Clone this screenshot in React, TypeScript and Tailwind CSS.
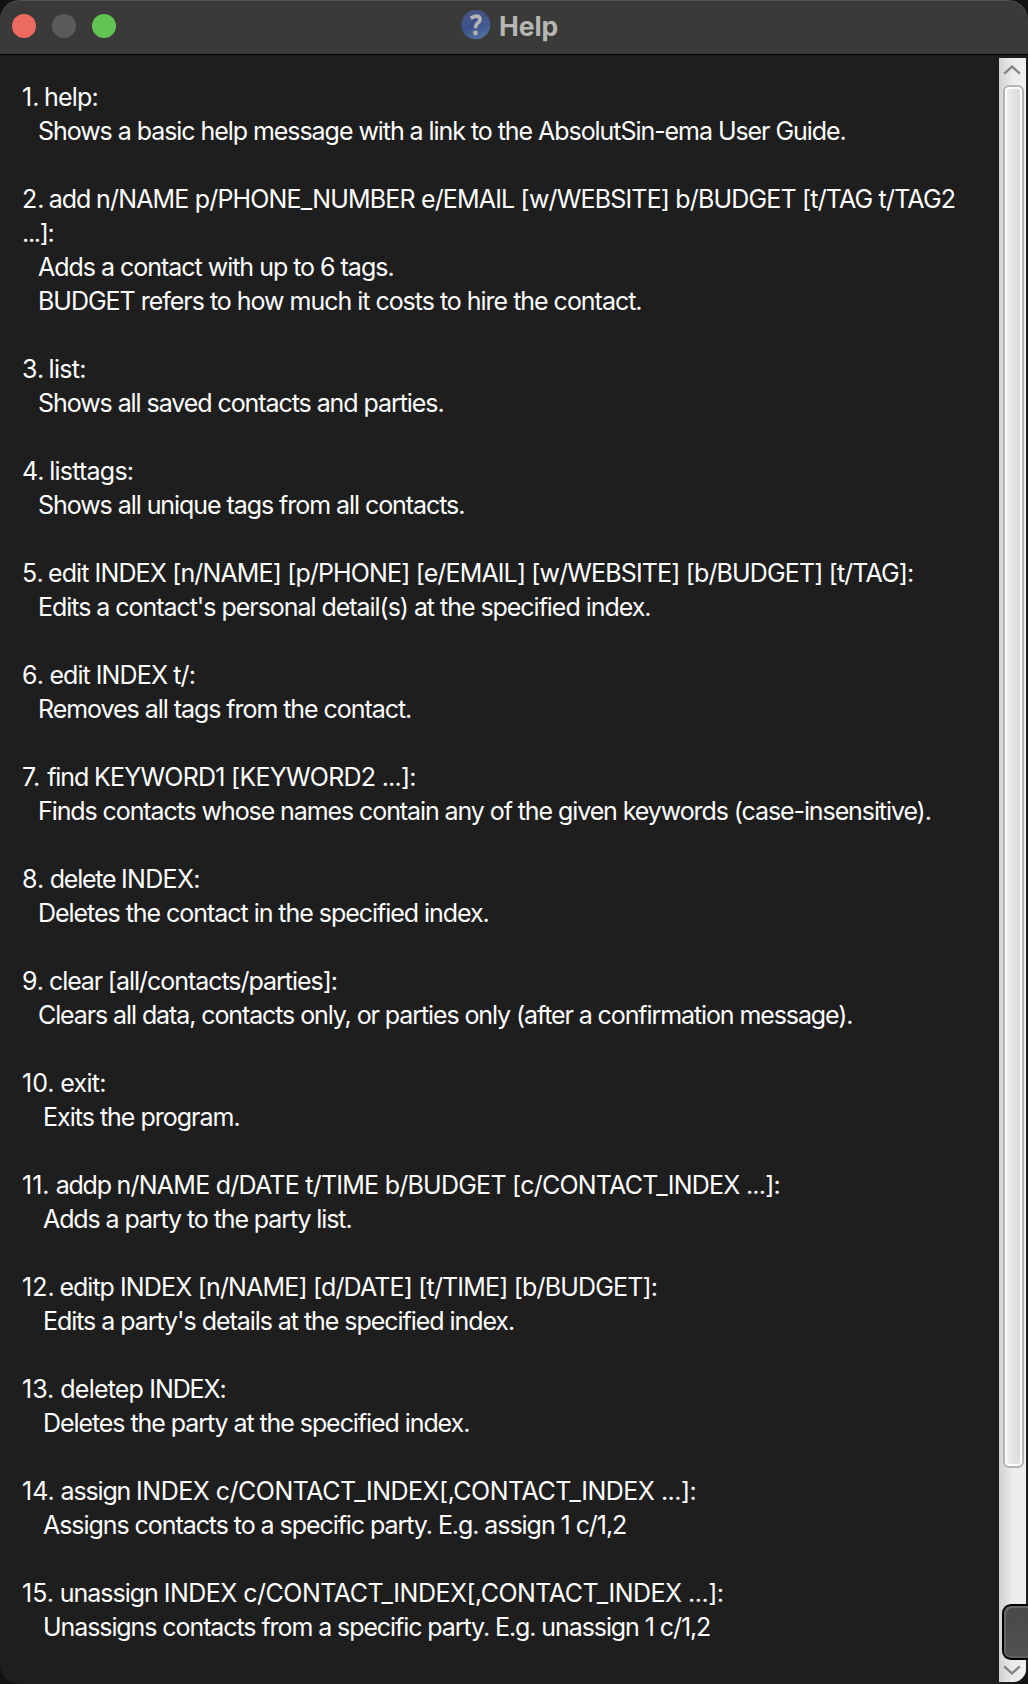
type Line = { text: string; tracking: string };
type Entry = {
  number: string;
  gap: string;
  command: Line[];
  wrapped?: Line;
  body: Line[];
  indent: string;
};

const SMALL = "pl-[16px]";
const LARGE = "pl-[21px]";

const entries: Entry[] = [
  {
    number: "1.",
    gap: "mr-[-1.6px]",
    command: [{ text: " help:", tracking: "tracking-[-0.8px]" }],
    body: [{ text: "Shows a basic help message with a link to the AbsolutSin-ema User Guide.", tracking: "tracking-[-1.055px]" }],
    indent: SMALL,
  },
  {
    number: "2.",
    gap: "mr-[-1.6px]",
    command: [
      { text: " add ", tracking: "tracking-[-1.1px]" },
      { text: "n/NAME p/PHONE_NUMBER e/EMAIL [w/WEBSITE] b/BUDGET [t/TAG t/TAG2", tracking: "tracking-[-0.83px]" },
    ],
    wrapped: { text: "...]:", tracking: "tracking-[-1.3px]" },
    body: [
      { text: "Adds a contact with up to 6 tags.", tracking: "tracking-[-1.02px]" },
      { text: "BUDGET refers to how much it costs to hire the contact.", tracking: "tracking-[-1.02px]" },
    ],
    indent: SMALL,
  },
  {
    number: "3.",
    gap: "mr-[-1.9px]",
    command: [{ text: " list:", tracking: "tracking-[-0.69px]" }],
    body: [{ text: "Shows all saved contacts and parties.", tracking: "tracking-[-1.07px]" }],
    indent: SMALL,
  },
  {
    number: "4.",
    gap: "mr-[-1.5px]",
    command: [{ text: " listtags:", tracking: "tracking-[-0.77px]" }],
    body: [{ text: "Shows all unique tags from all contacts.", tracking: "tracking-[-1.06px]" }],
    indent: SMALL,
  },
  {
    number: "5.",
    gap: "mr-[-1.85px]",
    command: [
      { text: " edit ", tracking: "tracking-[-0.915px]" },
      { text: "INDEX [n/NAME] [p/PHONE] [e/EMAIL] [w/WEBSITE] [b/BUDGET] [t/TAG]:", tracking: "tracking-[-0.86px]" },
    ],
    body: [{ text: "Edits a contact's personal detail(s) at the specified index.", tracking: "tracking-[-1.04px]" }],
    indent: SMALL,
  },
  {
    number: "6.",
    gap: "mr-[-0.4px]",
    command: [
      { text: " edit ", tracking: "tracking-[-1px]" },
      { text: "INDEX t/:", tracking: "tracking-[-0.85px]" },
    ],
    body: [{ text: "Removes all tags from the contact.", tracking: "tracking-[-1.05px]" }],
    indent: SMALL,
  },
  {
    number: "7.",
    gap: "mr-[1.15px]",
    command: [
      { text: " find ", tracking: "tracking-[-1.15px]" },
      { text: "KEYWORD1 [KEYWORD2 ...]:", tracking: "tracking-[-0.75px]" },
    ],
    body: [{ text: "Finds contacts whose names contain any of the given keywords (case-insensitive).", tracking: "tracking-[-1.09px]" }],
    indent: SMALL,
  },
  {
    number: "8.",
    gap: "mr-[-0.15px]",
    command: [
      { text: " delete ", tracking: "tracking-[-1.25px]" },
      { text: "INDEX:", tracking: "tracking-[-0.7px]" },
    ],
    body: [{ text: "Deletes the contact in the specified index.", tracking: "tracking-[-1.04px]" }],
    indent: SMALL,
  },
  {
    number: "9.",
    gap: "mr-[-0.85px]",
    command: [
      { text: " clear ", tracking: "tracking-[-1.15px]" },
      { text: "[all/contacts/parties]:", tracking: "tracking-[-1.03px]" },
    ],
    body: [{ text: "Clears all data, contacts only, or parties only (after a confirmation message).", tracking: "tracking-[-1.1px]" }],
    indent: SMALL,
  },
  {
    number: "10.",
    gap: "mr-[-0.6px]",
    command: [{ text: " exit:", tracking: "tracking-[-0.7px]" }],
    body: [{ text: "Exits the program.", tracking: "tracking-[-1px]" }],
    indent: LARGE,
  },
  {
    number: "11.",
    gap: "mr-[0.45px]",
    command: [
      { text: " addp ", tracking: "tracking-[-1.25px]" },
      { text: "n/NAME d/DATE t/TIME b/BUDGET [c/CONTACT_INDEX ...]:", tracking: "tracking-[-0.755px]" },
    ],
    body: [{ text: "Adds a party to the party list.", tracking: "tracking-[-1.1px]" }],
    indent: LARGE,
  },
  {
    number: "12.",
    gap: "mr-[-1.2px]",
    command: [
      { text: " editp ", tracking: "tracking-[-1px]" },
      { text: "INDEX [n/NAME] [d/DATE] [t/TIME] [b/BUDGET]:", tracking: "tracking-[-0.83px]" },
    ],
    body: [{ text: "Edits a party's details at the specified index.", tracking: "tracking-[-1.05px]" }],
    indent: LARGE,
  },
  {
    number: "13.",
    gap: "mr-[-0.15px]",
    command: [
      { text: " deletep ", tracking: "tracking-[-0.8px]" },
      { text: "INDEX:", tracking: "tracking-[-1.1px]" },
    ],
    body: [{ text: "Deletes the party at the specified index.", tracking: "tracking-[-1.07px]" }],
    indent: LARGE,
  },
  {
    number: "14.",
    gap: "mr-[0.05px]",
    command: [
      { text: " assign ", tracking: "tracking-[-1.16px]" },
      { text: "INDEX c/CONTACT_INDEX[,CONTACT_INDEX ...]:", tracking: "tracking-[-0.5px]" },
    ],
    body: [{ text: "Assigns contacts to a specific party. E.g. assign 1 c/1,2", tracking: "tracking-[-1.06px]" }],
    indent: LARGE,
  },
  {
    number: "15.",
    gap: "mr-[-0.05px]",
    command: [
      { text: " unassign ", tracking: "tracking-[-1.04px]" },
      { text: "INDEX c/CONTACT_INDEX[,CONTACT_INDEX ...]:", tracking: "tracking-[-0.51px]" },
    ],
    body: [{ text: "Unassigns contacts from a specific party. E.g. unassign 1 c/1,2", tracking: "tracking-[-1.085px]" }],
    indent: LARGE,
  },
];

function HelpIcon() {
  return (
    <svg width="30" height="30" viewBox="0 0 30 30">
      <defs>
        <linearGradient id="disc" x1="0" y1="0" x2="0.5" y2="1">
          <stop offset="0" stopColor="#3b4a78" />
          <stop offset="0.5" stopColor="#384b85" />
          <stop offset="1" stopColor="#4d6c9f" />
        </linearGradient>
      </defs>
      <circle cx="14.7" cy="14.7" r="14.6" fill="url(#disc)" />
      <path d="M1 13.5A14 14 0 0 1 29 13.5Q15 10.5 2.5 18Z" fill="#66759c" opacity="0.22" />
      <path
        d="M9.6 8.1Q18.6 3.6 18.9 9.4Q18.9 11.7 16.4 13.3Q14.5 14.8 14.5 18.2"
        fill="none"
        stroke="#b3b3b2"
        strokeWidth="3.7"
        strokeLinejoin="round"
      />
      <circle cx="14.4" cy="23" r="2.4" fill="#b3b3b2" />
    </svg>
  );
}

function TitleBar() {
  return (
    <header className="relative flex h-[55px] shrink-0 items-center border-b border-black bg-[#3a3a38] pl-3">
      <div className="flex gap-4 pb-[2px]">
        <span className="size-6 rounded-full bg-[#ec6a5e]" />
        <span className="size-6 rounded-full bg-[#5b5b59]" />
        <span className="size-6 rounded-full bg-[#61c554]" />
      </div>
      <div className="absolute left-[461px] top-[9px] flex items-center gap-[8px]">
        <HelpIcon />
        <span className="pt-[2px] text-[26.5px] font-bold leading-[30px] tracking-[-0.1px] text-[#b6b6b5]">Help</span>
      </div>
    </header>
  );
}

function Chevron({ down = false }: { down?: boolean }) {
  return (
    <svg width="18" height="10" viewBox="0 0 18 10" className={down ? "mr-[1px] rotate-180" : "mr-[1px]"}>
      <path d="M1.2 8.6L9 1.6L16.8 8.6" fill="none" stroke="#858585" strokeWidth="2.4" />
    </svg>
  );
}

function ScrollBar() {
  return (
    <div className="relative mt-[3px] mb-[2px] mr-[2px] flex w-[27px] shrink-0 flex-col items-center rounded-br-[12px] bg-linear-to-r from-[#d2d2d2] via-[#ebebeb] to-[#efefef]">
      <div className="flex h-[27px] shrink-0 items-start pt-[7px]">
        <Chevron />
      </div>
      <div className="ml-[1px] h-[1383px] w-[21px] rounded-[6px] border-2 border-[#b4b4b4] bg-linear-to-r from-[#f0f0f0] to-[#d9d9d9] shadow-[inset_0_0_0_2px_#fbfbfb]" />
      <div className="mt-auto flex pb-[7px]">
        <Chevron down />
      </div>
      <div className="absolute bottom-[22px] left-[3px] h-[56px] w-[26px] rounded-l-[9px] border-2 border-r-0 border-black bg-linear-to-b from-[#484848] to-[#525252] shadow-[inset_2px_2px_0_#666,inset_0_-2px_0_#606060]" />
    </div>
  );
}

export default function App() {
  return (
    <div className="h-[1684px] w-[1028px] overflow-hidden bg-[#111312] font-['Inter',sans-serif]">
      <div className="relative flex h-full w-full flex-col overflow-hidden rounded-[20px] bg-[#1e1e1e]">
        <TitleBar />
        <div className="flex min-h-0 flex-1">
          <main className="min-w-0 flex-1 pl-[22px] pt-[25px] text-[25px] leading-[34px] text-white">
            {entries.map((entry) => (
              <section key={entry.number} className="mb-[34px] whitespace-pre">
                <p>
                  <span className={entry.gap}>{entry.number}</span>
                  {entry.command.map((part) => (
                    <span key={part.text} className={part.tracking}>{part.text}</span>
                  ))}
                </p>
                {entry.wrapped && <p className={entry.wrapped.tracking}>{entry.wrapped.text}</p>}
                <div className={entry.indent}>
                  {entry.body.map((line) => (
                    <p key={line.text} className={line.tracking}>{line.text}</p>
                  ))}
                </div>
              </section>
            ))}
          </main>
          <ScrollBar />
        </div>
        <div className="pointer-events-none absolute inset-0 rounded-[20px] shadow-[inset_0_1px_0_#50504e]" />
      </div>
    </div>
  );
}
